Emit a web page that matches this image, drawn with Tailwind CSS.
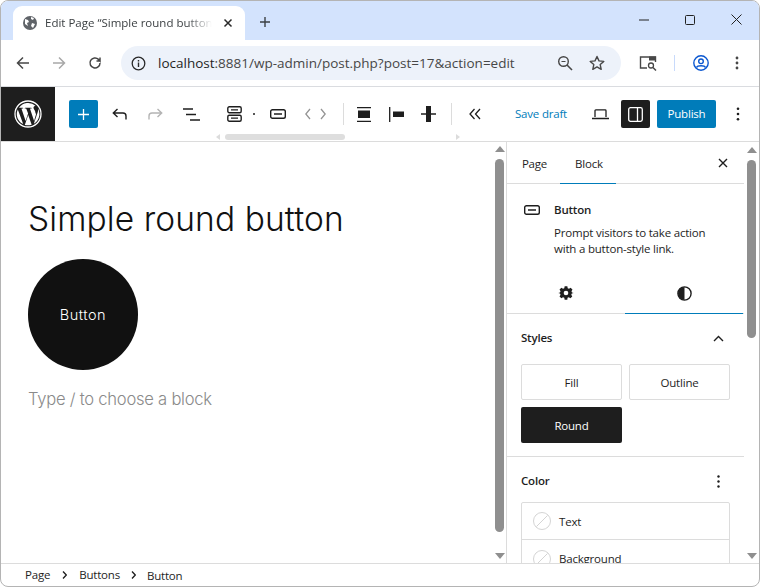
<!DOCTYPE html>
<html>
<head>
<meta charset="utf-8">
<script src="https://cdn.jsdelivr.net/npm/@tailwindcss/browser@4"></script>
</head>
<body class="bg-white">
<div class="w-[760px] h-[587px] flex flex-col overflow-hidden bg-white border border-[#b4b4b4] rounded-t-[8px] rounded-b-[8px] font-['Noto_Sans',sans-serif] text-[#1e1e1e]">
  <!-- Tab strip -->
  <div class="h-[39px] shrink-0 bg-[#d3e3fd] flex items-end pl-[12px] relative">
    <div class="w-[232px] h-[34px] bg-white rounded-t-[9px] flex items-center pl-[9px] pb-[1px]">
      <svg class="w-[16px] h-[16px] shrink-0" viewBox="0 0 16 16"><circle cx="8" cy="8" r="7" fill="#5f6368"/><path d="M3 4l3 1 1 2-2 1 1 3-3-2zM9 2l3 1-1 2-2-1zM10 8l3 1-2 4-2-2z" fill="#fff"/></svg>
      <span class="ml-[7px] w-[167px] overflow-hidden whitespace-nowrap text-[11.5px] text-[#3c4043] font-['Open_Sans',sans-serif] [mask-image:linear-gradient(to_right,#000_85%,transparent)]">Edit Page “Simple round button</span>
      <svg class="w-[10px] h-[10px] ml-[11px]" viewBox="0 0 10 10"><path d="M1.500 1.500l7 7M8.500 1.500l-7 7" stroke="#2a2a2a" stroke-width="1.500"/></svg>
    </div>
    <svg class="w-[12px] h-[12px] ml-[14px] mb-[12px]" viewBox="0 0 12 12"><path d="M6 1v10M1 6h10" stroke="#3c4043" stroke-width="1.400"/></svg>
    <div class="ml-auto flex items-center h-full pb-[2px] pr-[17px] gap-[36px]">
      <svg class="w-[10px] h-[10px]" viewBox="0 0 10 10"><path d="M0 5h10" stroke="#222" stroke-width="1"/></svg>
      <svg class="w-[10px] h-[10px]" viewBox="0 0 10 10"><rect x=".5" y=".5" width="9" height="9" rx="1" fill="none" stroke="#222"/></svg>
      <svg class="w-[11px] h-[11px]" viewBox="0 0 11 11"><path d="M.5.500l10 10M10.500.500l-10 10" stroke="#222" stroke-width="1"/></svg>
    </div>
  </div>
  <!-- Address bar -->
  <div class="h-[47px] shrink-0 bg-white border-b border-[#dadce0] flex items-center">
    <svg class="w-[14px] h-[14px] ml-[15px]" viewBox="0 0 14 14"><path d="M13 7H2M7 1.500L1.500 7 7 12.500" fill="none" stroke="#474747" stroke-width="1.500"/></svg>
    <svg class="w-[14px] h-[14px] ml-[22px]" viewBox="0 0 14 14"><path d="M1 7h11M7 1.500L12.500 7 7 12.500" fill="none" stroke="#a8a8a8" stroke-width="1.500"/></svg>
    <svg class="w-[14px] h-[14px] ml-[22px]" viewBox="0 0 14 14"><path d="M12 7a5 5 0 1 1-1.500-3.600L12 5V1.500M12 5H8.500" fill="none" stroke="#474747" stroke-width="1.500"/></svg>
    <div class="ml-[19px] w-[500px] h-[34px] rounded-full bg-[#edf2fa] flex items-center pl-[10px]">
      <svg class="w-[15px] h-[15px] shrink-0" viewBox="0 0 15 15"><circle cx="7.500" cy="7.500" r="6.300" fill="none" stroke="#2a2a2a" stroke-width="1.300"/><path d="M7.500 6.500v4.500M7.500 4v1.500" stroke="#2a2a2a" stroke-width="1.400"/></svg>
      <span class="ml-[12px] text-[13.5px] text-[#1f1f1f] font-['Open_Sans',sans-serif] whitespace-nowrap w-[358px] shrink-0">localhost<span class="text-[#474747]">:8881/wp-admin/post.php?post=17&amp;action=edit</span></span>
      <svg class="w-[16px] h-[16px] ml-[41px] shrink-0" viewBox="0 0 16 16"><circle cx="6.500" cy="6.500" r="4.800" fill="none" stroke="#474747" stroke-width="1.400"/><path d="M10 10l5 5" stroke="#474747" stroke-width="1.600"/><path d="M4.500 6.500h4" stroke="#474747" stroke-width="1.200"/></svg>
      <svg class="w-[16px] h-[16px] ml-[16px] shrink-0" viewBox="0 0 16 16"><path d="M8 1.500l2 4.400 4.800.5-3.600 3.200 1 4.700L8 11.900l-4.200 2.400 1-4.700L1.200 6.400 6 5.900z" fill="none" stroke="#474747" stroke-width="1.400" stroke-linejoin="round"/></svg>
    </div>
    <svg class="w-[18px] h-[16px] ml-[18px]" viewBox="0 0 18 16"><path d="M8 13H1.500V2h15v5" fill="none" stroke="#474747" stroke-width="1.400"/><rect x="10" y="1.500" width="7" height="4" fill="#474747"/><circle cx="12" cy="10.500" r="2.500" fill="none" stroke="#474747" stroke-width="1.300"/><path d="M14 12.500l3 3" stroke="#474747" stroke-width="1.500"/></svg>
    <div class="w-[1px] h-[16px] bg-[#c8dafb] ml-[17px]"></div>
    <svg class="w-[16px] h-[16px] ml-[18px]" viewBox="0 0 16 16"><circle cx="8" cy="8" r="7.200" fill="none" stroke="#0b57d0" stroke-width="1.400"/><circle cx="8" cy="6.300" r="2.300" fill="none" stroke="#0b57d0" stroke-width="1.400"/><path d="M3.500 12.500c1-2.300 8-2.300 9 0" fill="none" stroke="#0b57d0" stroke-width="1.400"/></svg>
    <svg class="w-[4px] h-[14px] ml-[26px]" viewBox="0 0 4 14"><circle cx="2" cy="2" r="1.400" fill="#474747"/><circle cx="2" cy="7" r="1.400" fill="#474747"/><circle cx="2" cy="12" r="1.400" fill="#474747"/></svg>
  </div>
  <!-- WP toolbar -->
  <div class="h-[55px] shrink-0 bg-white border-b border-[#dcdcdc] flex items-center relative">
    <div class="w-[54px] h-full bg-[#1e1e1e] flex items-center justify-center">
      <svg class="w-[28px] h-[28px]" viewBox="0 0 28 28"><circle cx="14" cy="14" r="13" fill="none" stroke="#fff" stroke-width="1.300"/><path d="M2.800 14c0 4.500 2.600 8.300 6.400 10.100L3.800 9.400A11 11 0 0 0 2.800 14zM21.500 13.400c0-1.400-.5-2.400-.9-3.100-.6-.9-1.100-1.700-1.100-2.600 0-1 .8-2 1.900-2h.1A11.200 11.200 0 0 0 5 7.800h.7c1.200 0 3-.1 3-.1.600 0 .7.900.1.900 0 0-.6.100-1.300.1l4.100 12.300 2.500-7.500-1.800-4.800c-.6 0-1.200-.1-1.200-.1-.6 0-.5-.9.100-.9 0 0 1.900.1 3 .1 1.200 0 3-.1 3-.1.600 0 .7.900.1.900 0 0-.6.100-1.300.1l4.100 12.200 1.100-3.800c.5-1.500.9-2.600.9-3.600zM14.200 15l-3.400 9.900a11.200 11.200 0 0 0 6.900-.2l-.1-.1zM24 8.600c0 .4.100.8.100 1.200 0 1.100-.2 2.400-.9 4l-3.400 9.900A11.200 11.200 0 0 0 24 8.600z" fill="#fff"/></svg>
    </div>
    <div class="ml-[14px] w-[29px] h-[28px] bg-[#007cba] rounded-[2px] flex items-center justify-center">
      <svg class="w-[11px] h-[11px]" viewBox="0 0 11 11"><path d="M5.500 0v11M0 5.500h11" stroke="#fff" stroke-width="1.300"/></svg>
    </div>
    <svg class="w-[15px] h-[12px] ml-[14px]" viewBox="0 0 15 12"><path d="M14 11.500V8c0-2-1.200-3-3-3H2M5.500 1L1.300 5l4.200 4" fill="none" stroke="#1e1e1e" stroke-width="1.400"/></svg>
    <svg class="w-[15px] h-[12px] ml-[21px]" viewBox="0 0 15 12"><path d="M1 11.500V8c0-2 1.200-3 3-3h9M9.500 1l4.200 4-4.200 4" fill="none" stroke="#b4b4b4" stroke-width="1.400"/></svg>
    <svg class="w-[17px] h-[13px] ml-[20px]" viewBox="0 0 17 13"><path d="M0 1h10M3 6.500h10M7 12h10" stroke="#1e1e1e" stroke-width="1.400"/></svg>
    <svg class="w-[15px] h-[16px] ml-[27px]" viewBox="0 0 15 16"><rect x=".8" y=".8" width="13.400" height="6" rx="1.500" fill="none" stroke="#1e1e1e" stroke-width="1.400"/><rect x=".8" y="9.200" width="13.400" height="6" rx="1.500" fill="none" stroke="#1e1e1e" stroke-width="1.400"/><path d="M4 3.800h7M4 12.200h7" stroke="#1e1e1e" stroke-width="1.200"/></svg>
    <div class="w-[2px] h-[2px] bg-[#1e1e1e] rounded-full ml-[11px]"></div>
    <svg class="w-[16px] h-[10px] ml-[15px]" viewBox="0 0 16 10"><rect x=".7" y=".7" width="14.600" height="8.600" rx="1.800" fill="none" stroke="#1e1e1e" stroke-width="1.400"/><path d="M4 5h8" stroke="#1e1e1e" stroke-width="1.300"/></svg>
    <svg class="w-[21px] h-[12px] ml-[19px]" viewBox="0 0 21 12"><path d="M5 1L.8 6 5 11M16 1l4.200 5L16 11" fill="none" stroke="#949494" stroke-width="1.300"/></svg>
    <div class="w-[1px] h-[22px] bg-[#dcdcdc] ml-[17px]"></div>
    <svg class="w-[14px] h-[15px] ml-[13px]" viewBox="0 0 14 15"><path d="M0 .7h14M0 14.300h14" stroke="#1e1e1e" stroke-width="1.300"/><rect x="1" y="3.500" width="12" height="7.500" fill="#1e1e1e"/></svg>
    <svg class="w-[15px] h-[15px] ml-[18px]" viewBox="0 0 15 15"><path d="M.7 0v15" stroke="#1e1e1e" stroke-width="1.300"/><rect x="4" y="4.500" width="11" height="5.500" fill="#1e1e1e"/></svg>
    <svg class="w-[15px] h-[16px] ml-[17px]" viewBox="0 0 15 16"><path d="M0 8h15" stroke="#1e1e1e" stroke-width="1.300"/><rect x="5" y="0" width="5" height="16" fill="#1e1e1e"/></svg>
    <div class="w-[1px] h-[22px] bg-[#dcdcdc] ml-[15px]"></div>
    <svg class="w-[12px] h-[12px] ml-[17px]" viewBox="0 0 12 12"><path d="M5.500 1L1 6l4.500 5M11 1L6.500 6l4.500 5" fill="none" stroke="#1e1e1e" stroke-width="1.300"/></svg>
    <span class="ml-[34px] w-[52px] text-[11.5px] tracking-[-0.2px] text-[#007cba] font-['Open_Sans',sans-serif] whitespace-nowrap">Save draft</span>
    <svg class="w-[17px] h-[11px] ml-[25px]" viewBox="0 0 17 11"><path d="M3 8V1.700c0-.5.300-.8.800-.8h9.400c.5 0 .8.300.8.800V8" fill="none" stroke="#1e1e1e" stroke-width="1.300"/><path d="M0 9.500h17" stroke="#1e1e1e" stroke-width="1.400"/></svg>
    <div class="ml-[12px] w-[29px] h-[28px] bg-[#1e1e1e] rounded-[2px] flex items-center justify-center">
      <svg class="w-[15px] h-[15px]" viewBox="0 0 15 15"><rect x=".7" y=".7" width="13.600" height="13.600" rx="1.800" fill="none" stroke="#fff" stroke-width="1.300"/><path d="M9.500 1v13" stroke="#fff" stroke-width="1.300"/></svg>
    </div>
    <div class="ml-[7px] w-[59px] h-[28px] bg-[#007cba] rounded-[2px] flex items-center justify-center text-white text-[11.5px] tracking-[-0.2px] font-['Open_Sans',sans-serif]">Publish</div>
    <svg class="w-[4px] h-[14px] ml-[20px]" viewBox="0 0 4 14"><circle cx="2" cy="1.800" r="1.300" fill="#1e1e1e"/><circle cx="2" cy="7" r="1.300" fill="#1e1e1e"/><circle cx="2" cy="12.200" r="1.300" fill="#1e1e1e"/></svg>
    <!-- horizontal scrollbar overlay -->
    <div class="absolute left-[215px] bottom-[1px] w-[244px] h-[7px] flex items-center">
      <div class="w-0 h-0 border-y-[3px] border-y-transparent border-r-[4px] border-r-[#dcdcdc]"></div>
      <div class="ml-[5px] w-[120px] h-[6px] rounded-full bg-[#dedede]"></div>
      <div class="ml-auto w-0 h-0 border-y-[3px] border-y-transparent border-l-[4px] border-l-[#dcdcdc]"></div>
    </div>
  </div>
  <!-- Main -->
  <div class="flex-1 min-h-0 flex">
    <!-- Editor canvas -->
    <div class="w-[492px] overflow-hidden pl-[27px] pt-[54px] font-['Inter',sans-serif]">
      <h1 class="text-[33.500px] leading-[46px] font-light tracking-[0.1px] text-[#111] whitespace-nowrap">Simple round button</h1>
      <div class="mt-[17px] w-[110px] h-[111px] rounded-full bg-[#111111] flex items-center justify-center text-[14.500px] font-light tracking-[0.5px] text-white">Button</div>
      <p class="mt-[17px] text-[16.600px] leading-[24px] font-light tracking-[-0.25px] text-[#8a8a8a] whitespace-nowrap">Type / to choose a block</p>
    </div>
    <!-- Editor scrollbar -->
    <div class="w-[13px] shrink-0 flex flex-col items-center pt-[4px] pb-[4px]">
      <div class="w-0 h-0 border-x-[5px] border-x-transparent border-b-[6px] border-b-[#8f8f8f]"></div>
      <div class="mt-[7px] w-[9px] h-[373px] rounded-full bg-[#8f8f8f]"></div>
      <div class="mt-auto w-0 h-0 border-x-[5px] border-x-transparent border-t-[6px] border-t-[#8f8f8f]"></div>
    </div>
    <!-- Sidebar -->
    <div class="flex-1 min-w-0 border-l border-[#dcdcdc] flex overflow-hidden">
      <div class="w-[237px] shrink-0 overflow-hidden">
        <!-- Header tabs -->
        <div class="h-[42px] border-b border-[#dcdcdc] flex relative text-[11.5px] tracking-[-0.2px] text-[#1e1e1e] font-['Open_Sans',sans-serif]">
          <div class="w-[53px] h-[42px] flex items-center justify-center pl-[2px] pt-[2px]">Page</div>
          <div class="w-[56px] h-[42px] flex items-center justify-center border-b border-[#007cba] pt-[2px] pl-[2px]">Block</div>
          <svg class="absolute left-[211px] top-[16px] w-[10px] h-[10px]" viewBox="0 0 10 10"><path d="M1 1l8 8M9 1l-8 8" stroke="#1e1e1e" stroke-width="1.400"/></svg>
        </div>
        <!-- Block card -->
        <div class="flex pl-[17px] pt-[18px]">
          <svg class="w-[16px] h-[10px] mt-[3px]" viewBox="0 0 16 10"><rect x=".7" y=".7" width="14.600" height="8.600" rx="1.800" fill="none" stroke="#1e1e1e" stroke-width="1.400"/><path d="M4 5h8" stroke="#1e1e1e" stroke-width="1.300"/></svg>
          <div class="ml-[14px] font-['Open_Sans',sans-serif] text-[11.5px] tracking-[-0.2px] text-[#1e1e1e]">
            <div class="leading-[16px] font-semibold">Button</div>
            <div class="mt-[7px] leading-[16px] whitespace-nowrap">Prompt visitors to take action<br>with a button-style link.</div>
          </div>
        </div>
        <!-- Settings / styles tabs -->
        <div class="mt-[18px] h-[39px] border-b border-[#dcdcdc] flex w-[237px]">
          <div class="w-[118px] flex items-center justify-center pb-[2px]">
            <svg class="w-[16px] h-[16px]" viewBox="0 0 24 24"><path fill-rule="evenodd" d="M10 2h4l.6 2.700 1.900.8 2.400-1.500 2.800 2.800-1.500 2.400.8 1.900L23.500 12l-2.800.8-.8 1.900 1.500 2.400-2.800 2.800-2.400-1.500-1.900.8L14 22h-4l-.6-2.800-1.900-.8-2.400 1.500-2.800-2.800 1.500-2.400-.8-1.900L.5 12l2.500-.9.8-1.900-1.500-2.400 2.800-2.800 2.400 1.500 1.900-.8zM12 8.500a3.500 3.500 0 1 0 0 7 3.500 3.500 0 0 0 0-7z" fill="#1e1e1e"/></svg>
          </div>
          <div class="w-[118px] flex items-center justify-center pb-[2px] border-b border-[#007cba] h-[39px]">
            <svg class="w-[15px] h-[15px]" viewBox="0 0 15 15"><circle cx="7.500" cy="7.500" r="6.600" fill="none" stroke="#1e1e1e" stroke-width="1.400"/><path d="M7.500 1a6.500 6.500 0 0 0 0 13z" fill="#1e1e1e"/></svg>
          </div>
        </div>
        <!-- Styles panel -->
        <div class="border-b border-[#dcdcdc] h-[143px] px-[14px] pt-[16px] font-['Open_Sans',sans-serif] text-[11.5px] tracking-[-0.2px]">
          <div class="flex items-center justify-between h-[16px] pr-[6px]">
            <span class="font-semibold">Styles</span>
            <svg class="w-[11px] h-[7px]" viewBox="0 0 11 7"><path d="M1 6l4.500-4.500L10 6" fill="none" stroke="#1e1e1e" stroke-width="1.400"/></svg>
          </div>
          <div class="mt-[18px] grid grid-cols-[101px_101px] gap-x-[7px] gap-y-[7px]">
            <div class="h-[36px] border border-[#dcdcdc] rounded-[2px] flex items-center justify-center pt-[2px]">Fill</div>
            <div class="h-[36px] border border-[#dcdcdc] rounded-[2px] flex items-center justify-center pt-[2px]">Outline</div>
            <div class="h-[36px] bg-[#1e1e1e] text-white rounded-[2px] flex items-center justify-center pt-[2px]">Round</div>
          </div>
        </div>
        <!-- Color panel -->
        <div class="px-[14px] pt-[16px] font-['Open_Sans',sans-serif] text-[11.5px] tracking-[-0.2px]">
          <div class="flex items-center justify-between h-[16px] pr-[10px]">
            <span class="font-semibold">Color</span>
            <svg class="w-[3px] h-[13px]" viewBox="0 0 3 13"><circle cx="1.500" cy="1.500" r="1.200" fill="#1e1e1e"/><circle cx="1.500" cy="6.500" r="1.200" fill="#1e1e1e"/><circle cx="1.500" cy="11.500" r="1.200" fill="#1e1e1e"/></svg>
          </div>
          <div class="mt-[13px] w-[209px] border border-[#dcdcdc] rounded-[2px]">
            <div class="h-[37px] flex items-center pl-[11px] border-b border-[#dcdcdc]">
              <svg class="w-[18px] h-[18px]" viewBox="0 0 18 18"><circle cx="9" cy="9" r="8.500" fill="none" stroke="#d4d4d4"/><path d="M3.500 14.500l11-11" stroke="#d4d4d4"/></svg>
              <span class="ml-[8px] pt-[1px]">Text</span>
            </div>
            <div class="h-[37px] flex items-center pl-[11px]">
              <svg class="w-[18px] h-[18px]" viewBox="0 0 18 18"><circle cx="9" cy="9" r="8.500" fill="none" stroke="#d4d4d4"/><path d="M3.500 14.500l11-11" stroke="#d4d4d4"/></svg>
              <span class="ml-[8px] pt-[1px]">Background</span>
            </div>
          </div>
        </div>
      </div>
      <!-- Sidebar scrollbar -->
      <div class="flex-1 flex flex-col items-center pt-[5px] pb-[4px]">
        <div class="w-0 h-0 border-x-[5px] border-x-transparent border-b-[6px] border-b-[#8f8f8f]"></div>
        <div class="mt-[7px] w-[9px] h-[178px] rounded-full bg-[#8f8f8f]"></div>
        <div class="mt-auto w-0 h-0 border-x-[5px] border-x-transparent border-t-[6px] border-t-[#8f8f8f]"></div>
      </div>
    </div>
  </div>
  <!-- Status bar -->
  <div class="h-[23px] shrink-0 border-t border-[#dcdcdc] flex items-center pl-[24px] text-[11.5px] tracking-[-0.2px] font-['Open_Sans',sans-serif] text-[#1e1e1e]">
    <span>Page</span>
    <svg class="w-[5px] h-[8px] ml-[12px]" viewBox="0 0 5 8"><path d="M1 .5L4.300 4 1 7.500" fill="none" stroke="#1e1e1e" stroke-width="1.300"/></svg>
    <span class="ml-[12px]">Buttons</span>
    <svg class="w-[5px] h-[8px] ml-[11px]" viewBox="0 0 5 8"><path d="M1 .5L4.300 4 1 7.500" fill="none" stroke="#1e1e1e" stroke-width="1.300"/></svg>
    <span class="ml-[11px] pt-[1px]">Button</span>
  </div>
</div>
</body>
</html>
